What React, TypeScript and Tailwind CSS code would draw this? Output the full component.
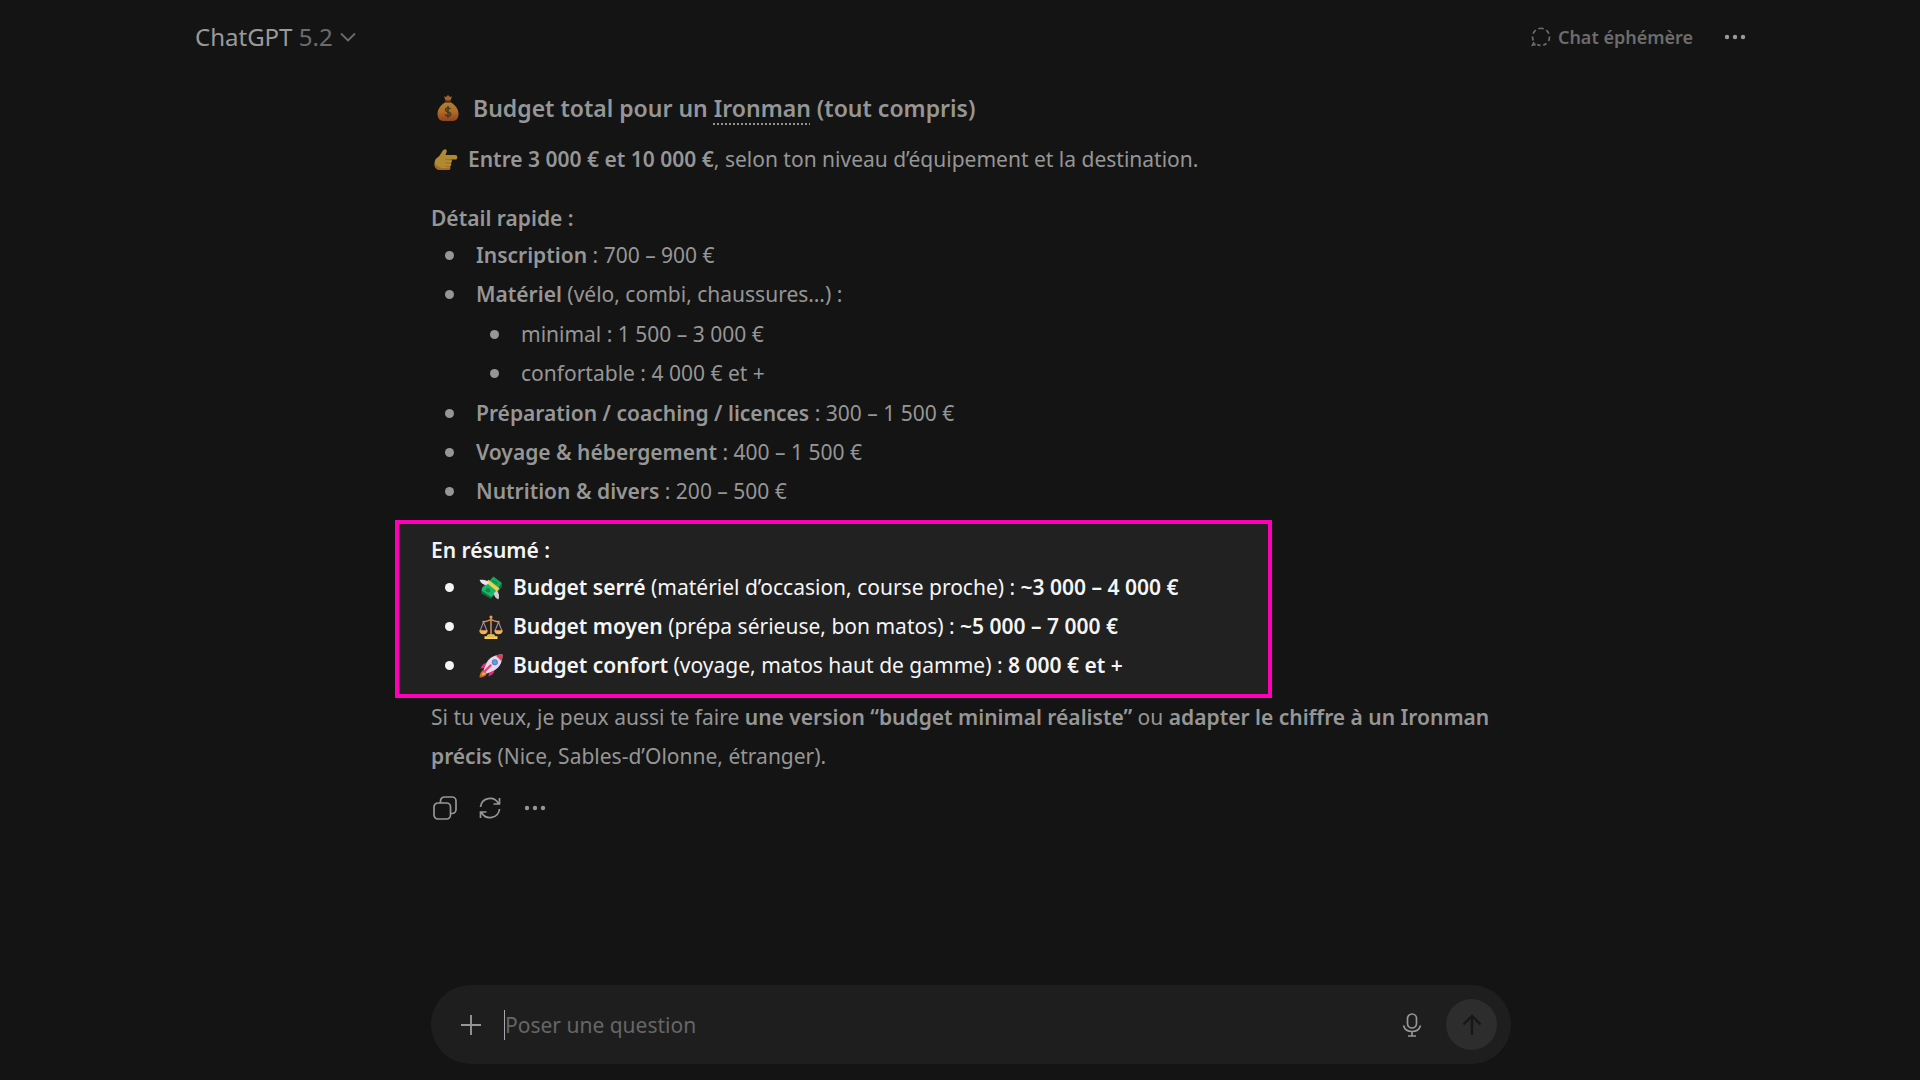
import type { ReactNode } from "react";

function MoneyBag() {
  return (
    <svg viewBox="0 0 24 30" className="w-6 h-[30px] shrink-0" role="img" aria-label="sac d'argent">
      <defs>
        <linearGradient id="bag" x1="0" y1="0" x2="0" y2="1">
          <stop offset="0" stopColor="#b07f30" />
          <stop offset=".5" stopColor="#b06c22" />
          <stop offset="1" stopColor="#8f4322" />
        </linearGradient>
      </defs>
      <path d="M8 2.200 10 3l2-2 2 2 2-.8-1.600 4.500H9.600z" fill="#a3622a" />
      <path d="M9.300 6.700h5.400l.4 1.800H8.900z" fill="#5a2a1c" />
      <path d="M9 8.500h6c4.500 2.600 7.500 6.800 7.500 11.300 0 4.800-2.600 7.200-5.500 7.200H7c-2.900 0-5.500-2.400-5.500-7.200C1.500 15.300 4.500 11.100 9 8.500z" fill="url(#bag)" />
      <path d="M14.500 15.200c-.5-.9-1.400-1.300-2.500-1.300-1.500 0-2.500.8-2.500 1.900 0 2.900 5.200 1.300 5.200 4.300 0 1.200-1.100 2-2.700 2-1.400 0-2.400-.5-2.800-1.600M12 12v12" fill="none" stroke="#45392a" strokeWidth="1.500" />
    </svg>
  );
}

function PointRight() {
  return (
    <svg viewBox="0 0 24 24" className="w-6 h-6 shrink-0" role="img" aria-label="main pointant à droite">
      <path d="M10.300 1.500c1.800-.7 2.900.8 2.300 2.600L11.500 7h9.800c2.700 0 2.700 4.600 0 4.600h-4.300c1.500.9 1.300 3.100-.3 3.500 1.100 1 .8 3-.7 3.400.9 1.300.1 3.500-1.700 3.500H7.500C3 22.000.5 20 .5 16c0-3.800 1.300-5.600 3.600-7C6.900 7.200 7.800 2.500 10.300 1.500z" fill="#b08a30" />
      <path d="M.5 16c0 4 2.500 6 7 6h6.800c1.500 0 2.400-1.500 2-2.800-3 1.500-9 1.300-11.300-.2-2-1.300-3.500-2-4.500-3z" fill="#a0662a" />
      <path d="M11.500 11.600h5.500M11.500 15h5M11.500 18.500h4" stroke="#94682a" strokeWidth=".8" />
    </svg>
  );
}

function MoneyWings() {
  return (
    <svg viewBox="0 0 24 24" className="w-6 h-6 shrink-0" role="img" aria-label="billets avec des ailes">
      <path d="M14.500.5 23 7l-6 9.500L6.500 9z" fill="#17a65c" />
      <path d="M23 7v3.500L18 18l-1-1.500z" fill="#0b713d" />
      <path d="m3 12 5-5.500 10 9-5.500 6L2.500 15z" fill="#1fb366" />
      <path d="M2.500 15v2.500l9.500 5.500.5-1.500z" fill="#0b713d" />
      <path d="m7 6.200 2.500-2.400 11 8.700-2.500 3z" fill="#efd04c" />
      <circle cx="9" cy="14.200" r="2.300" fill="#0f8b4b" />
      <path d="M13.500 4.500 18 7.500" stroke="#0f8b4b" strokeWidth="1.600" />
      <path d="M.5 4c3.500-.8 7-.3 9.500 2.300L7.700 9C4.500 8.800 2 7.500.5 4z" fill="#e9e4ec" />
      <path d="M19.500 23.500c-2.500-1-4.400-3-4.700-6l2.700-2.900c2.600 2.200 3.100 5.400 2 8.900z" fill="#d3cdd8" />
    </svg>
  );
}

function Scales() {
  return (
    <svg viewBox="0 0 24 24" className="w-6 h-6 shrink-0" role="img" aria-label="balance">
      <path d="M4.500 7 1 16M4.500 7 8 16M19.500 7 16 16M19.500 7 23 16" fill="none" stroke="#a08a9a" strokeWidth="1.100" />
      <path d="M12 2v18M3.500 6.500c3 .8 5.500-.5 8.500-2 3 1.500 5.500 2.800 8.500 2" fill="none" stroke="#d9935e" strokeWidth="1.500" />
      <circle cx="12" cy="2" r="1.600" fill="#e2a051" />
      <path d="M.3 15.200h8.400c0 2.600-1.700 4-4.200 4s-4.200-1.400-4.200-4zM15.300 15.200h8.400c0 2.600-1.700 4-4.200 4s-4.200-1.400-4.200-4z" fill="#f5b05c" />
      <path d="M9 19.300h6l1.500 2h-9z" fill="#efc052" />
      <path d="M5.500 21.200h13V24h-13z" fill="#f8cf52" />
    </svg>
  );
}

function Rocket() {
  return (
    <svg viewBox="0 0 24 24" className="w-6 h-6 shrink-0" role="img" aria-label="fusée">
      <path d="M5 16c-3 .5-4.500 4-4.500 7.500 3.500 0 7-1.500 7.500-4.500z" fill="#c9682c" />
      <path d="M2.500 21.500c.3-2 1.200-3.300 2.500-4l2 2c-.7 1.200-2.200 1.800-4.500 2z" fill="#f3ab45" />
      <path d="M10.500 8.500C6 8 3 10 1.500 14.500l5-.5zM15.500 13.500C16 18 14 21 9.500 22.500l.5-5z" fill="#de2f70" />
      <path d="M23.500.5c-6.500 0-12 2-15.500 7.500l-3.500 8 3.500 3.500 8-3.500c5.500-3.500 7.500-9 7.500-15.500z" fill="#e2d9ec" />
      <path d="M23.500.5c-2.500 0-4.700.3-6.800 1l5.800 5.800c.7-2.100 1-4.300 1-6.800z" fill="#e63c4e" />
      <path d="m11.500 11.500-6 6" stroke="#e4457c" strokeWidth="2.400" strokeLinecap="round" />
      <circle cx="15.800" cy="8.200" r="3" fill="#5f78b8" />
      <circle cx="15.800" cy="8.200" r="2" fill="#52a4e4" />
    </svg>
  );
}

function Dots() {
  return (
    <svg viewBox="0 0 24 24" className="w-6 h-6" fill="currentColor" aria-hidden="true">
      <circle cx="4" cy="12" r="2.200" />
      <circle cx="12" cy="12" r="2.200" />
      <circle cx="20" cy="12" r="2.200" />
    </svg>
  );
}

function Item({ icon, children }: { icon?: ReactNode; children: ReactNode }) {
  return (
    <li className="relative pl-[45px] before:absolute before:left-[14px] before:top-[15px] before:size-[9px] before:rounded-full before:bg-current">
      {icon ? (
        <div className="flex items-center gap-[10px] pl-[3px]">
          {icon}
          <div>{children}</div>
        </div>
      ) : (
        children
      )}
    </li>
  );
}

function B({ children }: { children: ReactNode }) {
  return <strong className="font-semibold">{children}</strong>;
}

export default function App() {
  return (
    <div className="flex min-h-screen flex-col bg-[#141414] pl-[183px] pr-[161px] font-['Noto_Sans','Open_Sans',sans-serif] text-[21px] leading-[39px] text-[#969696]">
      <header className="flex h-[74px] items-center justify-between px-3">
        <button type="button" className="flex items-center gap-[7px] text-2xl text-[#9a9a9a]">
          <span>
            ChatGPT <span className="text-[#6c6c6c]">5.2</span>
          </span>
          <svg viewBox="0 0 16 16" className="size-4 text-[#6c6c6c]" fill="none" stroke="currentColor" strokeWidth="1.800" aria-hidden="true">
            <path d="m1 4.500 7 7 7-7" />
          </svg>
        </button>
        <div className="flex items-center gap-[30px]">
          <button type="button" className="flex items-center gap-[7px] text-lg font-semibold text-[#6c6c6c]">
            <svg viewBox="0 0 20 20" className="size-5" fill="none" stroke="currentColor" strokeWidth="1.700" aria-hidden="true">
              <path d="M7.300 1.700a8.700 8.700 0 0 1 5.400 0M15.200 3.200a8.500 8.500 0 0 1 2.700 3.600M18.500 9.500a8.500 8.500 0 0 1-1 4.500M15.500 16.500a8.500 8.500 0 0 1-3.200 1.600M9.500 18.400a8.500 8.500 0 0 1-3.300-.9M4.800 3.200a8.500 8.500 0 0 0-2.700 3.600M1.500 9.500a8.500 8.500 0 0 0 .9 4M3 15.200 1.600 18l3.200-.7" />
            </svg>
            Chat éphémère
          </button>
          <button type="button" aria-label="Plus d'options" className="text-[#9a9a9a]">
            <Dots />
          </button>
        </div>
      </header>

      <main className="mx-auto w-full max-w-[1080px] flex-1 pt-[15px]">
        <h2 className="flex items-center gap-[13px] pl-[5px] text-[23px] leading-[39px] font-semibold">
          <MoneyBag />
          <span>
            Budget total pour un{" "}
            <span className="underline decoration-dotted decoration-2 underline-offset-[6px]">Ironman</span> (tout compris)
          </span>
        </h2>
        <p className="mt-3 flex items-center gap-[10px] pl-[3px]">
          <PointRight />
          <span>
            <B>Entre 3 000 € et 10 000 €</B>, selon ton niveau d’équipement et la destination.
          </span>
        </p>

        <h3 className="mt-[21px] leading-9 font-semibold">Détail rapide :</h3>
        <ul>
          <Item><B>Inscription</B> : 700 – 900 €</Item>
          <Item>
            <B>Matériel</B> (vélo, combi, chaussures…) :
            <ul className="py-px">
              <Item>minimal : 1 500 – 3 000 €</Item>
              <Item>confortable : 4 000 € et +</Item>
            </ul>
          </Item>
          <Item><B>Préparation / coaching / licences</B> : 300 – 1 500 €</Item>
          <Item><B>Voyage &amp; hébergement</B> : 400 – 1 500 €</Item>
          <Item><B>Nutrition &amp; divers</B> : 200 – 500 €</Item>
        </ul>

        <section className="mt-[9px] -ml-9 max-w-[877px] border-4 border-[#ff00b8] bg-[#212121] px-8 pt-2 pb-[9px] text-[#f5f5f5]">
          <h3 className="leading-9 font-semibold">En résumé :</h3>
          <ul>
            <Item icon={<MoneyWings />}>
              <B>Budget serré</B> (matériel d’occasion, course proche) : <B>~3 000 – 4 000 €</B>
            </Item>
            <Item icon={<Scales />}>
              <B>Budget moyen</B> (prépa sérieuse, bon matos) : <B>~5 000 – 7 000 €</B>
            </Item>
            <Item icon={<Rocket />}>
              <B>Budget confort</B> (voyage, matos haut de gamme) : <B>8 000 € et +</B>
            </Item>
          </ul>
        </section>

        <p>
          Si tu veux, je peux aussi te faire <B>une version “budget minimal réaliste”</B> ou{" "}
          <B>adapter le chiffre à un Ironman</B> <B>précis</B> (Nice, Sables-d’Olonne, étranger).
        </p>

        <div className="mt-5 flex gap-[21px] pl-[2px]">
          <button type="button" aria-label="Copier">
            <svg viewBox="0 0 24 24" className="size-6" fill="none" stroke="currentColor" strokeWidth="1.700" aria-hidden="true">
              <rect x="1" y="7" width="16.500" height="16" rx="4" />
              <path d="M7.500 7V5a4 4 0 0 1 4-4H19a4 4 0 0 1 4 4v8.500a4 4 0 0 1-4 4h-1.500" />
            </svg>
          </button>
          <button type="button" aria-label="Régénérer">
            <svg viewBox="0 0 24 24" className="size-6" fill="none" stroke="currentColor" strokeWidth="1.700" aria-hidden="true">
              <path d="M2.500 11A9.600 9.600 0 0 1 20.500 7.500M21.500 2v6h-6M21.500 13A9.600 9.600 0 0 1 3.500 16.500M2.500 22v-6h6" />
            </svg>
          </button>
          <button type="button" aria-label="Plus d'actions">
            <Dots />
          </button>
        </div>
      </main>

      <form className="mx-auto mb-4 flex h-[79px] w-full max-w-[1080px] items-center rounded-full bg-[#1e1e1e] pr-[14px] pl-7">
        <button type="button" aria-label="Ajouter">
          <svg viewBox="0 0 24 24" className="size-6" fill="none" stroke="currentColor" strokeWidth="1.900" aria-hidden="true">
            <path d="M12 2v20M2 12h20" />
          </svg>
        </button>
        <span className="ml-[21px] h-[30px] w-px bg-[#a8a8a8]" />
        <input
          type="text"
          aria-label="Poser une question"
          placeholder="Poser une question"
          className="h-10 min-w-0 flex-1 bg-transparent outline-none placeholder:text-[#666666]"
        />
        <button type="button" aria-label="Dicter">
          <svg viewBox="0 0 24 24" className="size-6" fill="none" stroke="currentColor" strokeWidth="1.700" aria-hidden="true">
            <rect x="7.500" y="1" width="9" height="14" rx="4.500" />
            <path d="M3.500 12.500c1 3.700 4.300 6 8.500 6s7.500-2.300 8.500-6M12 18.500V23M8 23h8" />
          </svg>
        </button>
        <button type="submit" aria-label="Envoyer" className="ml-[22px] flex size-[51px] items-center justify-center rounded-full bg-[#2d2d2d] text-[#171717]">
          <svg viewBox="0 0 24 24" className="size-6" fill="none" stroke="currentColor" strokeWidth="2.400" aria-hidden="true">
            <path d="M12 22V3M3.500 11.500 12 3l8.500 8.500" />
          </svg>
        </button>
      </form>
    </div>
  );
}
